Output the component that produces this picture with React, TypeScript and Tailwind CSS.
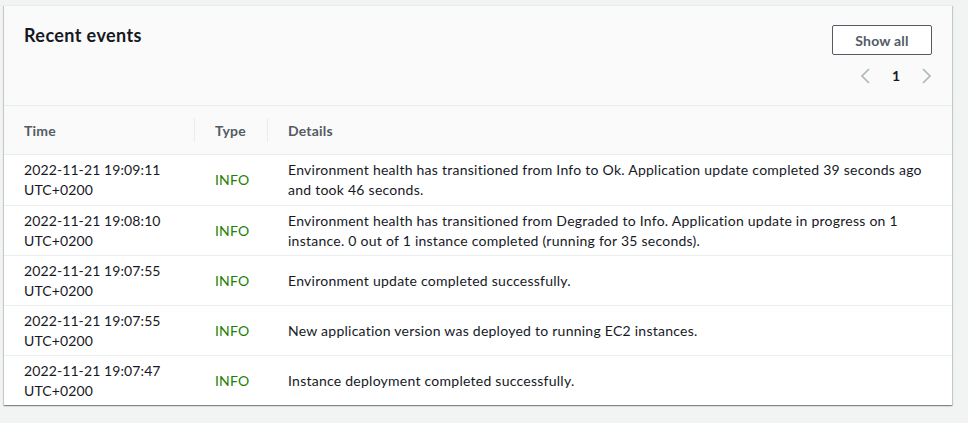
import React from "react";

const rows = [
  {
    time: "2022-11-21 19:09:11",
    lines: [
      "Environment health has transitioned from Info to Ok. Application update completed 39 seconds ago",
      "and took 46 seconds.",
    ],
  },
  {
    time: "2022-11-21 19:08:10",
    lines: [
      "Environment health has transitioned from Degraded to Info. Application update in progress on 1",
      "instance. 0 out of 1 instance completed (running for 35 seconds).",
    ],
  },
  { time: "2022-11-21 19:07:55", lines: ["Environment update completed successfully."] },
  { time: "2022-11-21 19:07:55", lines: ["New application version was deployed to running EC2 instances."] },
  { time: "2022-11-21 19:07:47", lines: ["Instance deployment completed successfully."] },
];

export default function App() {
  return (
    <div
      className="h-[423px] w-[968px] bg-[#f2f3f3] pt-[5px] pl-[4px]"
      style={{ fontFamily: "Lato, 'Open Sans', sans-serif" }}
    >
      <div className="w-[948px] bg-white shadow-[0_1px_1px_0_rgba(0,28,36,0.3),1px_1px_1px_0_rgba(0,28,36,0.15),-1px_1px_1px_0_rgba(0,28,36,0.15)] border-t border-[#eaeded]">
        <div className="flex h-[100px] justify-between bg-[#fafafa] border-b border-[#eaeded] pl-5 pr-5 pt-[18px]">
          <h2 className="text-[18px] leading-[22px] font-bold text-[#16191f] tracking-[0.4px]">Recent events</h2>
          <div className="flex flex-col items-end pt-px">
            <button className="h-[30px] w-[100px] rounded-[2px] border border-[#545b64] bg-white text-[14px] font-bold text-[#545b64] tracking-[0.2px]">
              Show all
            </button>
            <div className="mt-[11px] flex items-center gap-[22px] text-[14px] font-bold text-[#16191f]">
              <svg width="10" height="16" viewBox="0 0 10 16" fill="none">
                <path d="M9 1 L2 8 L9 15" stroke="#aab7b8" strokeWidth="1.6" />
              </svg>
              <span className="leading-5">1</span>
              <svg width="10" height="16" viewBox="0 0 10 16" fill="none">
                <path d="M1 1 L8 8 L1 15" stroke="#aab7b8" strokeWidth="1.6" />
              </svg>
            </div>
          </div>
        </div>
        <div className="grid grid-cols-[191px_73px_1fr] h-[49px] items-center bg-[#fafafa] border-b border-[#eaeded] text-[14px] font-bold text-[#545b64] tracking-[0.2px]">
          <div className="pl-5 flex items-center justify-between">
            <span>Time</span>
            <span className="h-6 w-px bg-[#eaeded]" />
          </div>
          <div className="pl-5 flex items-center justify-between">
            <span>Type</span>
            <span className="h-6 w-px bg-[#eaeded]" />
          </div>
          <div className="pl-5">Details</div>
        </div>
        {rows.map((r, i) => (
          <div
            key={i}
            className={`grid grid-cols-[191px_73px_1fr] h-[50px] items-center text-[14px] leading-5 text-[#16191f] ${
              i > 0 ? "border-t border-[#eaeded]" : ""
            }`}
          >
            <div className="pl-5 tracking-[0.1px]">
              <div>{r.time}</div>
              <div>UTC+0200</div>
            </div>
            <div className="pl-5 text-[#1d8102] tracking-[0.2px]">INFO</div>
            <div className="pl-5 tracking-[0.25px]">
              {r.lines.map((l, j) => (
                <div key={j} className="whitespace-nowrap">
                  {l}
                </div>
              ))}
            </div>
          </div>
        ))}
      </div>
    </div>
  );
}
